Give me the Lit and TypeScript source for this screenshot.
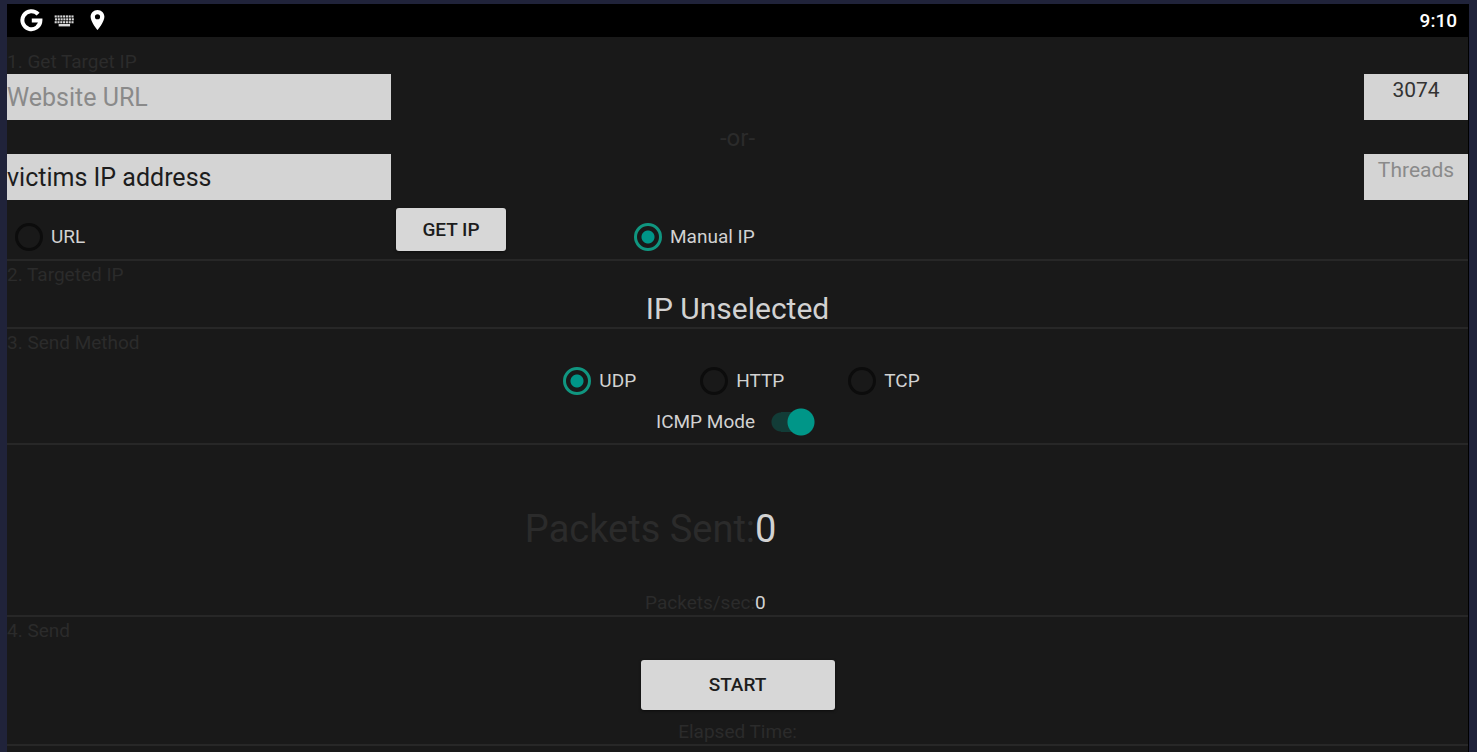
import { LitElement, html, css, svg } from "lit";
import { customElement, property, state } from "lit/decorators.js";

@customElement("status-bar")
class StatusBar extends LitElement {
  @property() time = "";

  static styles = css`
    :host {
      display: flex;
      align-items: center;
      justify-content: space-between;
      height: 33px;
      padding: 0 11px 0 13px;
      background: #000;
      color: #fff;
      font-size: 19px;
      font-weight: 500;
    }
    .icons {
      display: flex;
      align-items: center;
      gap: 11px;
    }
    svg {
      display: block;
    }
  `;

  render() {
    const keys = [0, 1, 2].map((row) =>
      [0, 1, 2, 3, 4, 5, 6].map(
        (col) => svg`<rect x=${0.4 + col * 2.8 + (row === 1 ? 0.3 : 0)} y=${0.4 + row * 2.9} width="2.1" height="2.1" />`
      )
    );
    return html`
      <div class="icons">
        <svg width="23" height="23" viewBox="0 0 23 23" fill="none" stroke="#fff" stroke-width="4" aria-label="Google">
          <path d="M18.1 5.2A9 9 0 1 0 20.4 11.4H11.8" />
        </svg>
        <svg width="21" height="12" viewBox="0 0 20.5 12" fill="#d8d8d8" aria-label="Keyboard">
          ${keys}
          <rect x="4.4" y="9" width="11.4" height="2.4" />
        </svg>
        <svg width="23" height="23" viewBox="0 0 24 24" fill="#fff" aria-label="Location">
          <path
            d="M12 1C7.9 1 4.8 4.2 4.8 8.2C4.8 13.8 12 22 12 22S19.2 13.8 19.2 8.2C19.2 4.2 16.1 1 12 1ZM12 10.8A2.7 2.7 0 1 1 12 5.4A2.7 2.7 0 0 1 12 10.8Z"
          />
        </svg>
      </div>
      <span>${this.time}</span>
    `;
  }
}

@customElement("app-root")
class AppRoot extends LitElement {
  @state() private source = "manual";
  @state() private method = "udp";

  static styles = css`
    :host {
      display: block;
      box-sizing: border-box;
      min-height: 100vh;
      padding: 4px 8px 0 7px;
      background: #20233a;
      font-family: Roboto, sans-serif;
      font-size: 19px;
      line-height: 24px;
      color: #d2d2d2;
    }
    .screen {
      display: flex;
      flex-direction: column;
      min-height: calc(100vh - 4px);
      background: #191919;
      border-right: 1px solid #000;
      box-sizing: border-box;
    }
    section {
      padding-top: 2px;
      border-bottom: 2px solid #272727;
    }
    h2,
    p {
      margin: 0;
      font-size: 19px;
      font-weight: 400;
    }
    .dim,
    h2 {
      color: #2b2b2b;
    }
    .target {
      padding-top: 13px;
    }
    .fields {
      display: grid;
      grid-template-columns: 384px 1fr 104px;
      grid-template-rows: 46px 34px 46px;
    }
    .fields input {
      box-sizing: border-box;
      width: 100%;
      height: 100%;
      margin: 0;
      padding: 0;
      border: 0;
      border-radius: 0;
      outline: 0;
      background: #d4d4d4;
      color: #1d1d1d;
      font: 400 25px/32px Roboto, sans-serif;
    }
    .fields input.small {
      grid-column: 3;
      padding-bottom: 14px;
      font-size: 21px;
      text-align: center;
      color: #333;
    }
    .fields input::placeholder {
      color: #8a8a8a;
      opacity: 1;
    }
    .or {
      grid-column: 1 / -1;
      text-align: center;
      font-size: 24px;
      line-height: 36px;
    }
    .sources {
      display: grid;
      grid-template-columns: 389px 238px 1fr;
      align-items: start;
      padding: 8px 0;
    }
    .radio {
      display: flex;
      align-items: center;
      gap: 8px;
    }
    .sources .radio {
      padding-top: 15px;
    }
    .sources .radio:first-child {
      padding-left: 8px;
    }
    input[type="radio"] {
      appearance: none;
      box-sizing: border-box;
      width: 28px;
      height: 28px;
      margin: 0;
      border: 3px solid #0c0c0c;
      border-radius: 50%;
    }
    input[type="radio"]:checked {
      border-color: #109680;
      background: radial-gradient(circle, #009688 6px, transparent 7px);
    }
    button {
      justify-self: start;
      width: 110px;
      height: 43px;
      padding: 0;
      border: 0;
      border-radius: 3px;
      background: #d7d7d7;
      color: #1d1d1d;
      font: 500 19px/24px Roboto, sans-serif;
      box-shadow: 0 1px 3px #0008;
    }
    .address {
      margin-top: 4px;
      text-align: center;
      font-size: 30px;
      line-height: 36px;
    }
    .methods {
      display: flex;
      justify-content: center;
      gap: 64px;
      padding: 12px 0 0 8px;
    }
    .mode {
      display: flex;
      align-items: center;
      justify-content: center;
      gap: 16px;
      height: 28px;
      padding: 13px 4px 7px 0;
    }
    .mode input {
      appearance: none;
      width: 44px;
      height: 28px;
      margin: 0;
      background: radial-gradient(circle 14px at 30px 14px, #009688 13px, transparent 14px),
        linear-gradient(#123c37, #123c37) 10px 4px / 20px 20px no-repeat,
        radial-gradient(circle 10px at 10px 14px, #123c37 9px, transparent 10px);
    }
    .stats {
      display: grid;
      grid-template-columns: 51.2% 1fr;
      padding-top: 60px;
    }
    .stats .dim {
      text-align: right;
    }
    .total {
      font-size: 38px;
      line-height: 48px;
      padding-bottom: 38px;
    }
    .send {
      display: grid;
    }
    .send button {
      justify-self: center;
      width: 194px;
      height: 50px;
      margin: 17px 0 10px;
    }
    .send p {
      text-align: center;
    }
  `;

  private radio(group: string, value: string, label: string, current: string, pick: (v: string) => void) {
    return html`
      <label class="radio">
        <input type="radio" name=${group} .checked=${current === value} @change=${() => pick(value)} />
        <span>${label}</span>
      </label>
    `;
  }

  render() {
    const pickSource = (v: string) => (this.source = v);
    const pickMethod = (v: string) => (this.method = v);
    return html`
      <main class="screen">
        <status-bar time="9:10"></status-bar>
        <section class="target">
          <h2>1. Get Target IP</h2>
          <div class="fields">
            <input type="text" placeholder="Website URL" aria-label="Website URL" />
            <input class="small" type="text" value="3074" aria-label="Port" />
            <div class="or dim">-or-</div>
            <input type="text" value="victims IP address" aria-label="IP address" />
            <input class="small" type="text" placeholder="Threads" aria-label="Threads" />
          </div>
          <div class="sources">
            ${this.radio("source", "url", "URL", this.source, pickSource)}
            <button type="button">GET IP</button>
            ${this.radio("source", "manual", "Manual IP", this.source, pickSource)}
          </div>
        </section>
        <section>
          <h2>2. Targeted IP</h2>
          <p class="address">IP Unselected</p>
        </section>
        <section>
          <h2>3. Send Method</h2>
          <div class="methods">
            ${this.radio("method", "udp", "UDP", this.method, pickMethod)}
            ${this.radio("method", "http", "HTTP", this.method, pickMethod)}
            ${this.radio("method", "tcp", "TCP", this.method, pickMethod)}
          </div>
          <label class="mode">
            <span>ICMP Mode</span>
            <input type="checkbox" role="switch" checked />
          </label>
        </section>
        <section class="stats">
          <span class="total dim">Packets Sent:</span><span class="total">0</span>
          <span class="dim">Packets/sec:</span><span>0</span>
        </section>
        <section class="send">
          <h2>4. Send</h2>
          <button type="button">START</button>
          <p class="dim">Elapsed Time:</p>
        </section>
      </main>
    `;
  }
}
